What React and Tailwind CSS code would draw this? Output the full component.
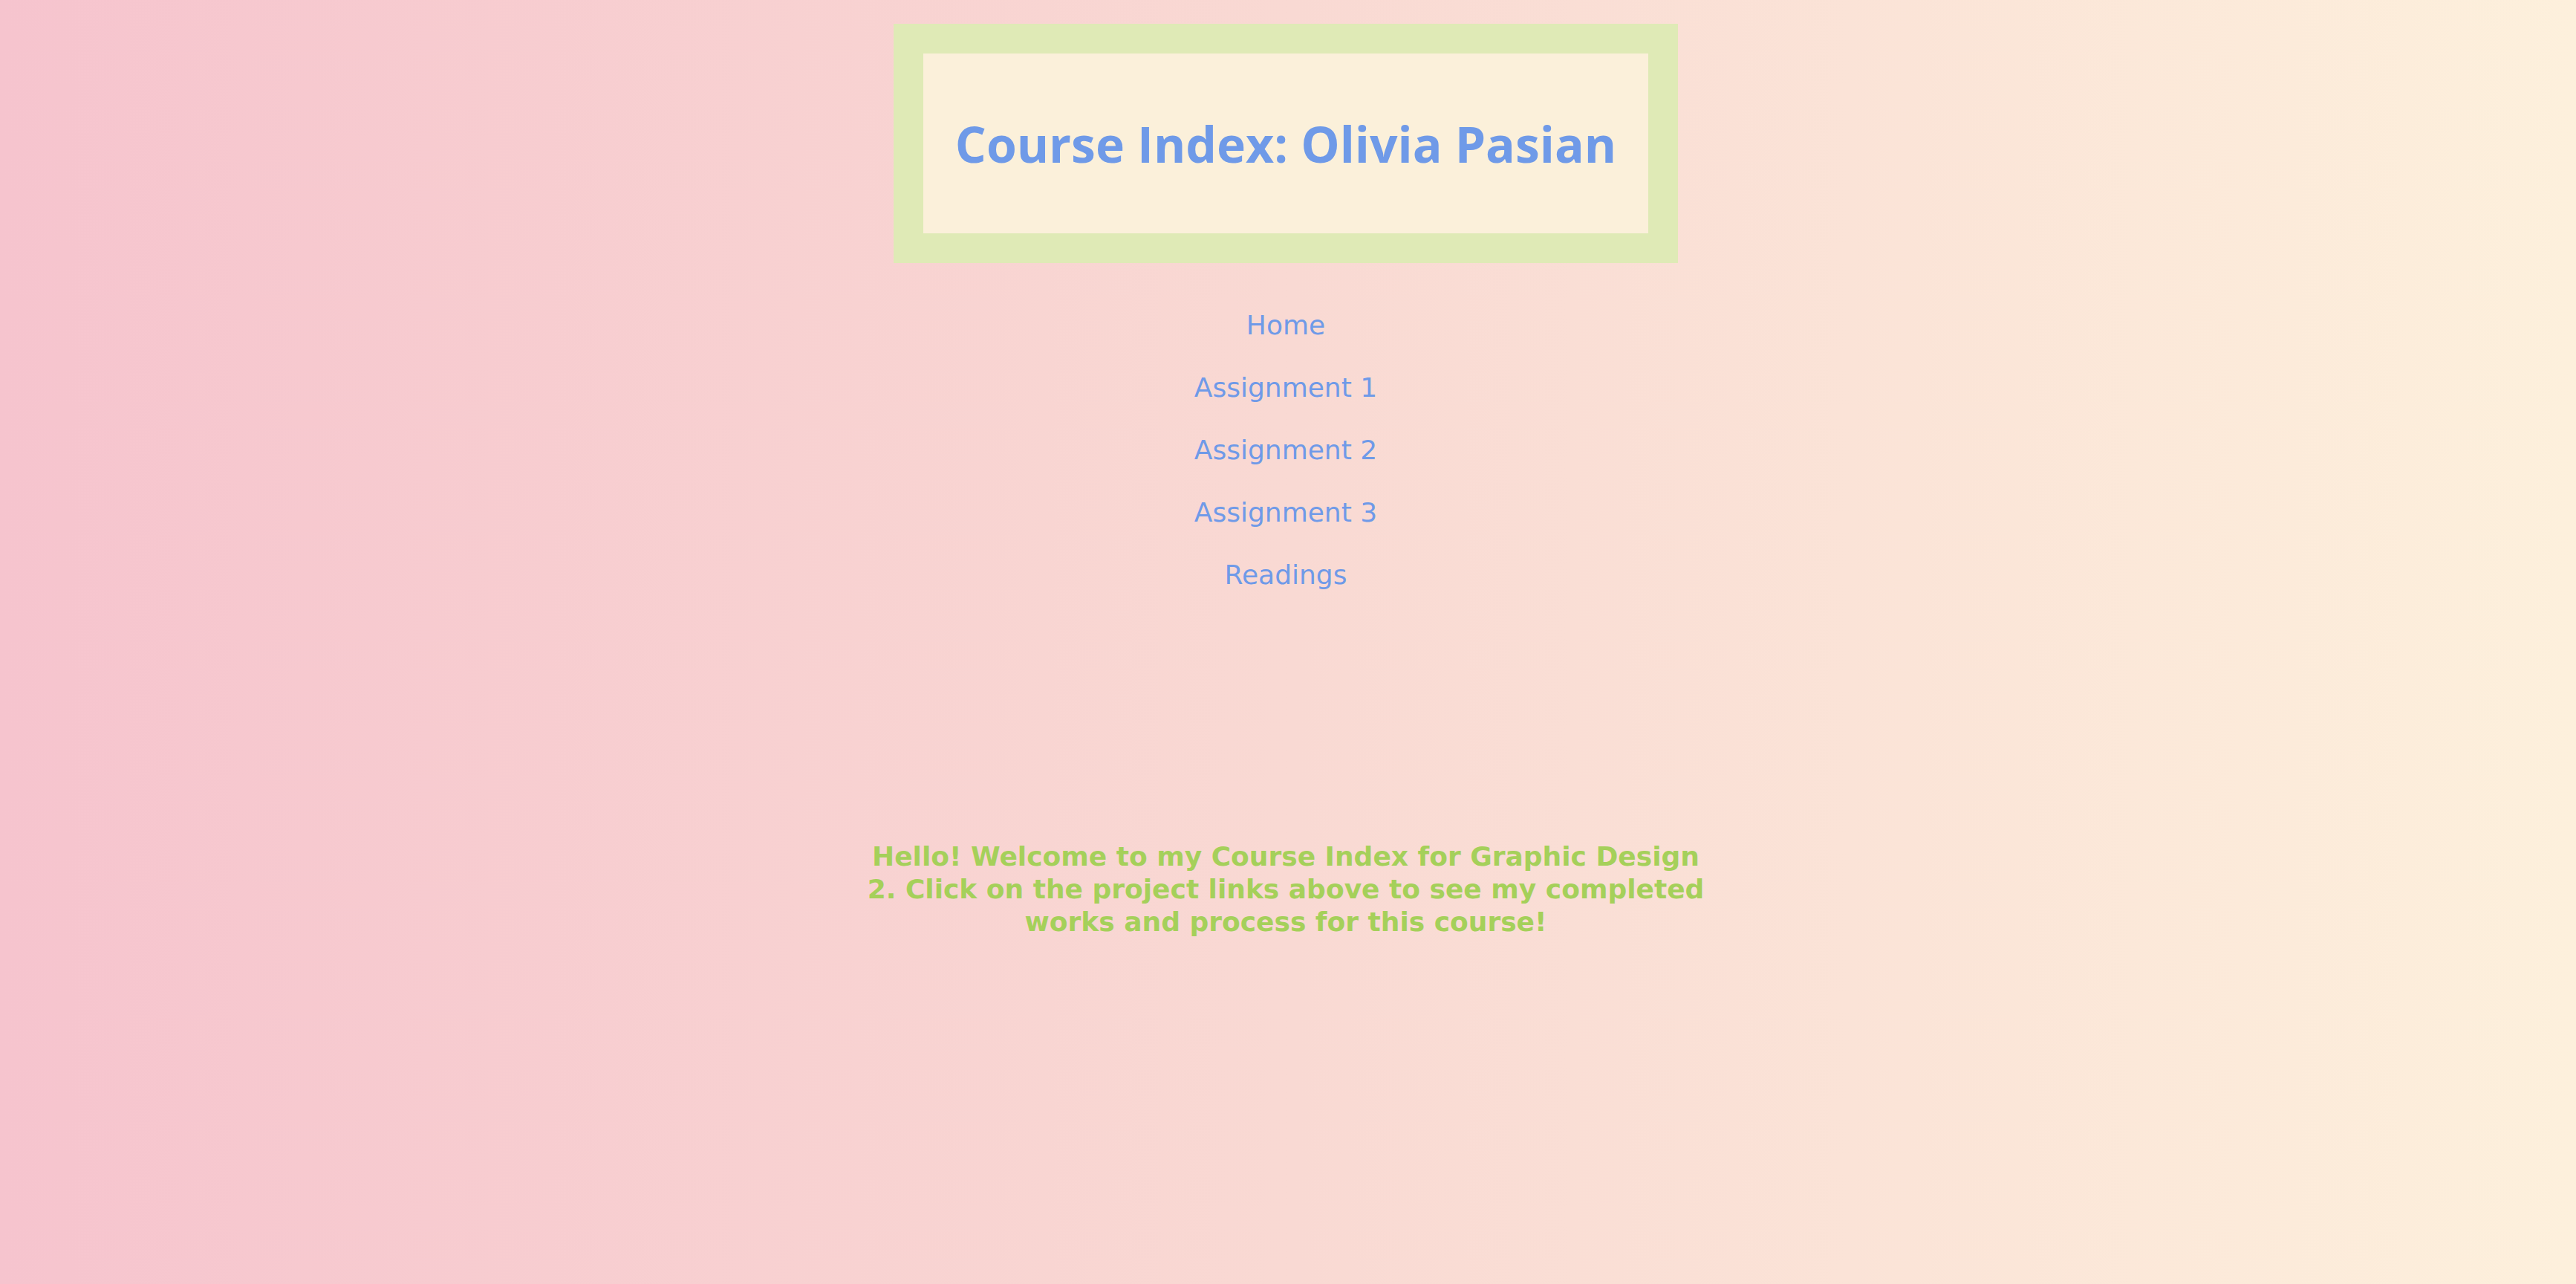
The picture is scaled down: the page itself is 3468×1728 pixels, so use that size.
export default function App() {
  const links = ["Home", "Assignment 1", "Assignment 2", "Assignment 3", "Readings"];
  return (
    <div className="min-h-screen w-full bg-gradient-to-r from-[#f6c4ce] via-[#f9d9d3] to-[#fdf0dc] pt-[32px] pr-[6px] flex flex-col items-center">
      <div className="bg-[#dfeab6] p-[40px]">
        <div className="bg-[#fbf0da] w-[976px] h-[242px] flex items-center justify-center">
          <h1 className="text-[66px] font-bold text-[#6f9ae8] leading-none" style={{ fontFamily: '"Open Sans", "DejaVu Sans", sans-serif' }}>
            Course Index: Olivia Pasian
          </h1>
        </div>
      </div>
      <nav className="mt-[62px] flex flex-col items-center gap-[40px]" style={{ fontFamily: '"DejaVu Sans", Verdana, sans-serif' }}>
        {links.map((l) => (
          <a key={l} href="#" className="text-[36px] leading-[44px] text-[#6f9ae8]">
            {l}
          </a>
        ))}
      </nav>
      <p className="mt-[335px] w-[1140px] text-center text-[36px] leading-[44px] font-bold text-[#a5d05a]" style={{ fontFamily: '"DejaVu Sans", Verdana, sans-serif' }}>
        Hello! Welcome to my Course Index for Graphic Design 2. Click on the project links above to see my completed works and process for this course!
      </p>
    </div>
  );
}
